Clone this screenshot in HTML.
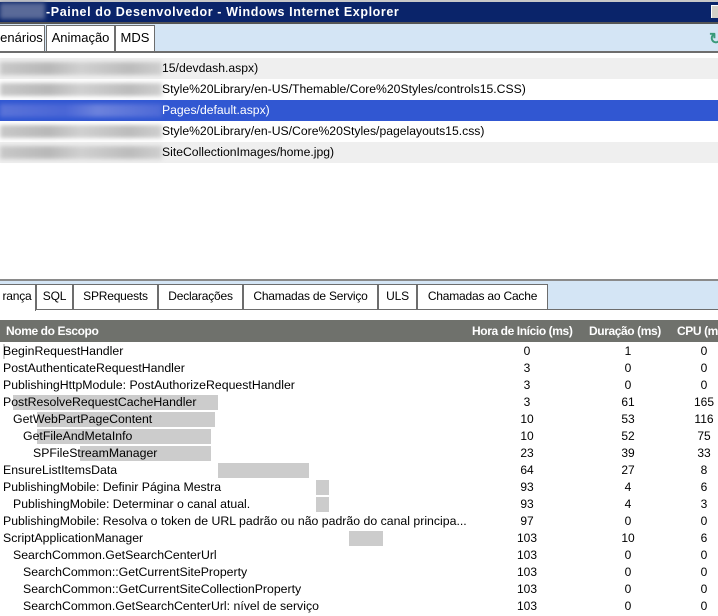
<!DOCTYPE html>
<html><head><meta charset="utf-8"><style>
*{margin:0;padding:0;box-sizing:border-box}
body{width:718px;height:616px;overflow:hidden;background:#fff;font-family:"Liberation Sans",sans-serif;font-size:12px;color:#000;position:relative}
.a{position:absolute}
.tab{position:absolute;border:1px solid #6d6d6d;border-bottom:none;background:#fff;font-size:13px;text-align:center;line-height:24px}
.tab2{position:absolute;border:1px solid #6d6d6d;background:#fff;font-size:12px;text-align:center;line-height:22px;letter-spacing:-0.2px}
.r{position:absolute;left:0;width:718px;height:21px;line-height:21px;font-size:12.2px}
.blur{position:absolute;left:0;top:4px;width:162px;height:13px;background:linear-gradient(90deg,#c8c8c8,#b8b8b8 30%,#d0d0d0 50%,#bcbcbc 80%,#cfcfcf);filter:blur(2px)}
.row{position:absolute;left:0;width:718px;height:17px;line-height:17px;font-size:12.3px}
.bar{position:absolute;background:#cccccc;height:15px}
.n{position:absolute;width:40px;text-align:center;font-size:12px}
</style></head><body>
<div class="a" style="left:0;top:0;width:718px;height:22px;background:#0a246a;border-top:2px solid #c8c8c8"></div>
<div class="a" style="left:0;top:3px;width:45px;height:16px;background:#5a6a98;filter:blur(2px)"></div>
<div class="a" style="left:46px;top:2px;height:20px;line-height:20px;color:#fff;font-weight:bold;font-size:12.5px;letter-spacing:0.6px">-Painel do Desenvolvedor - Windows Internet Explorer</div>
<div class="a" style="left:711px;top:5px;width:7px;height:13px;background:#d4d0c8;border-top:1px solid #fff;border-left:1px solid #fff"></div>
<div class="a" style="left:0;top:22px;width:718px;height:2px;background:#555"></div>
<div class="a" style="left:0;top:24px;width:718px;height:27px;background:#d4e5f5"></div>
<div class="tab" style="left:-2px;top:25px;width:47px;height:26px">enários</div>
<div class="tab" style="left:46px;top:25px;width:69px;height:26px">Animação</div>
<div class="tab" style="left:115px;top:25px;width:40px;height:26px">MDS</div>
<div class="a" style="left:709px;top:29px;color:#3a9a7a;font-weight:bold;font-size:16px">↻</div>
<div class="a" style="left:0;top:51px;width:718px;height:2px;background:#6d6d6d"></div>

<div class="r" style="top:58px;background:#efefef"><div class="blur"></div><span class="a" style="left:162px">15/devdash.aspx)</span></div>
<div class="r" style="top:79px;background:#fff"><div class="blur"></div><span class="a" style="left:162px">Style%20Library/en-US/Themable/Core%20Styles/controls15.CSS)</span></div>
<div class="r" style="top:100px;background:#3157d2;color:#fff"><div class="blur" style="background:linear-gradient(90deg,#5a73d8,#4a66d6 40%,#6c82dc 60%,#4d69d6);"></div><span class="a" style="left:162px">Pages/default.aspx)</span></div>
<div class="r" style="top:121px;background:#fff"><div class="blur"></div><span class="a" style="left:162px">Style%20Library/en-US/Core%20Styles/pagelayouts15.css)</span></div>
<div class="r" style="top:142px;background:#efefef"><div class="blur"></div><span class="a" style="left:162px">SiteCollectionImages/home.jpg)</span></div>

<div class="a" style="left:0;top:279px;width:718px;height:2px;background:#8a8a8a"></div>
<div class="a" style="left:0;top:281px;width:718px;height:28px;background:#d4e5f5"></div>
<div class="a" style="left:0;top:309px;width:718px;height:1px;background:#6d6d6d"></div>
<div class="tab2" style="left:-2px;top:284px;width:38px;height:27px;border-bottom:none">rança</div>
<div class="tab2" style="left:36px;top:284px;width:37px;height:26px">SQL</div>
<div class="tab2" style="left:73px;top:284px;width:85px;height:26px">SPRequests</div>
<div class="tab2" style="left:158px;top:284px;width:85px;height:26px">Declarações</div>
<div class="tab2" style="left:243px;top:284px;width:135px;height:26px">Chamadas de Serviço</div>
<div class="tab2" style="left:378px;top:284px;width:39px;height:26px">ULS</div>
<div class="tab2" style="left:417px;top:284px;width:131px;height:26px">Chamadas ao Cache</div>

<div class="a" style="left:0;top:320px;width:718px;height:22px;background:#6f716c;color:#fff;font-weight:bold;line-height:22px;font-size:12px;letter-spacing:-0.4px">
<span class="a" style="left:6px">Nome do Escopo</span>
<span class="a" style="left:472px">Hora de Início (ms)</span>
<span class="a" style="left:589px">Duração (ms)</span>
<span class="a" style="left:677px;white-space:nowrap">CPU (ms)</span>
</div>

<div class="bar" style="left:3px;top:344px;width:2px"></div>
<div class="bar" style="left:13px;top:395px;width:205px"></div>
<div class="bar" style="left:37px;top:412px;width:178px"></div>
<div class="bar" style="left:37px;top:429px;width:174px"></div>
<div class="bar" style="left:80px;top:446px;width:131px"></div>
<div class="bar" style="left:218px;top:463px;width:91px"></div>
<div class="bar" style="left:316px;top:480px;width:13px"></div>
<div class="bar" style="left:316px;top:497px;width:13px"></div>
<div class="bar" style="left:349px;top:531px;width:34px"></div>

<div class="row" style="top:343px"><span class="a" style="left:3px">BeginRequestHandler</span><span class="n" style="left:507px">0</span><span class="n" style="left:608px">1</span><span class="n" style="left:684px">0</span></div>
<div class="row" style="top:360px"><span class="a" style="left:3px">PostAuthenticateRequestHandler</span><span class="n" style="left:507px">3</span><span class="n" style="left:608px">0</span><span class="n" style="left:684px">0</span></div>
<div class="row" style="top:377px"><span class="a" style="left:3px">PublishingHttpModule: PostAuthorizeRequestHandler</span><span class="n" style="left:507px">3</span><span class="n" style="left:608px">0</span><span class="n" style="left:684px">0</span></div>
<div class="row" style="top:394px"><span class="a" style="left:3px">PostResolveRequestCacheHandler</span><span class="n" style="left:507px">3</span><span class="n" style="left:608px">61</span><span class="n" style="left:684px">165</span></div>
<div class="row" style="top:411px"><span class="a" style="left:13px">GetWebPartPageContent</span><span class="n" style="left:507px">10</span><span class="n" style="left:608px">53</span><span class="n" style="left:684px">116</span></div>
<div class="row" style="top:428px"><span class="a" style="left:23px">GetFileAndMetaInfo</span><span class="n" style="left:507px">10</span><span class="n" style="left:608px">52</span><span class="n" style="left:684px">75</span></div>
<div class="row" style="top:445px"><span class="a" style="left:33px">SPFileStreamManager</span><span class="n" style="left:507px">23</span><span class="n" style="left:608px">39</span><span class="n" style="left:684px">33</span></div>
<div class="row" style="top:462px"><span class="a" style="left:3px">EnsureListItemsData</span><span class="n" style="left:507px">64</span><span class="n" style="left:608px">27</span><span class="n" style="left:684px">8</span></div>
<div class="row" style="top:479px"><span class="a" style="left:3px">PublishingMobile: Definir Página Mestra</span><span class="n" style="left:507px">93</span><span class="n" style="left:608px">4</span><span class="n" style="left:684px">6</span></div>
<div class="row" style="top:496px"><span class="a" style="left:13px">PublishingMobile: Determinar o canal atual.</span><span class="n" style="left:507px">93</span><span class="n" style="left:608px">4</span><span class="n" style="left:684px">3</span></div>
<div class="row" style="top:513px"><span class="a" style="left:3px;white-space:nowrap">PublishingMobile: Resolva o token de URL padrão ou não padrão do canal principa...</span><span class="n" style="left:507px">97</span><span class="n" style="left:608px">0</span><span class="n" style="left:684px">0</span></div>
<div class="row" style="top:530px"><span class="a" style="left:3px">ScriptApplicationManager</span><span class="n" style="left:507px">103</span><span class="n" style="left:608px">10</span><span class="n" style="left:684px">6</span></div>
<div class="row" style="top:547px"><span class="a" style="left:13px">SearchCommon.GetSearchCenterUrl</span><span class="n" style="left:507px">103</span><span class="n" style="left:608px">0</span><span class="n" style="left:684px">0</span></div>
<div class="row" style="top:564px"><span class="a" style="left:23px">SearchCommon::GetCurrentSiteProperty</span><span class="n" style="left:507px">103</span><span class="n" style="left:608px">0</span><span class="n" style="left:684px">0</span></div>
<div class="row" style="top:581px"><span class="a" style="left:23px">SearchCommon::GetCurrentSiteCollectionProperty</span><span class="n" style="left:507px">103</span><span class="n" style="left:608px">0</span><span class="n" style="left:684px">0</span></div>
<div class="row" style="top:598px"><span class="a" style="left:23px">SearchCommon.GetSearchCenterUrl: nível de serviço</span><span class="n" style="left:507px">103</span><span class="n" style="left:608px">0</span><span class="n" style="left:684px">0</span></div>
</body></html>
